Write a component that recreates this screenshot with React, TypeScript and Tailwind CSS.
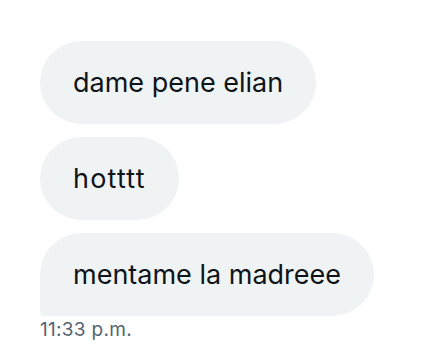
export default function App() {
  const font = { fontFamily: 'Inter, "Noto Sans", sans-serif' };
  return (
    <div className="w-[439px] h-[349px] bg-white pl-[40px] pt-[41px] flex flex-col items-start" style={font}>
      <div className="flex flex-col items-start gap-[13px]">
        <div className="h-[83px] px-[33px] flex items-center rounded-[42px] bg-[#eff3f4] text-[#0f1419] text-[27px] leading-none">
          dame pene elian
        </div>
        <div className="h-[83px] px-[33px] flex items-center rounded-[42px] bg-[#eff3f4] text-[#0f1419] text-[27px] leading-none tracking-[1.2px]">
          hotttt
        </div>
        <div className="h-[83px] px-[33px] flex items-center rounded-[42px] rounded-bl-[4px] bg-[#eff3f4] text-[#0f1419] text-[27px] leading-none">
          mentame la madreee
        </div>
      </div>
      <div className="mt-[3px] text-[19px] leading-[22px] tracking-[0.3px] text-[#536471]">11:33 p.m.</div>
    </div>
  );
}
